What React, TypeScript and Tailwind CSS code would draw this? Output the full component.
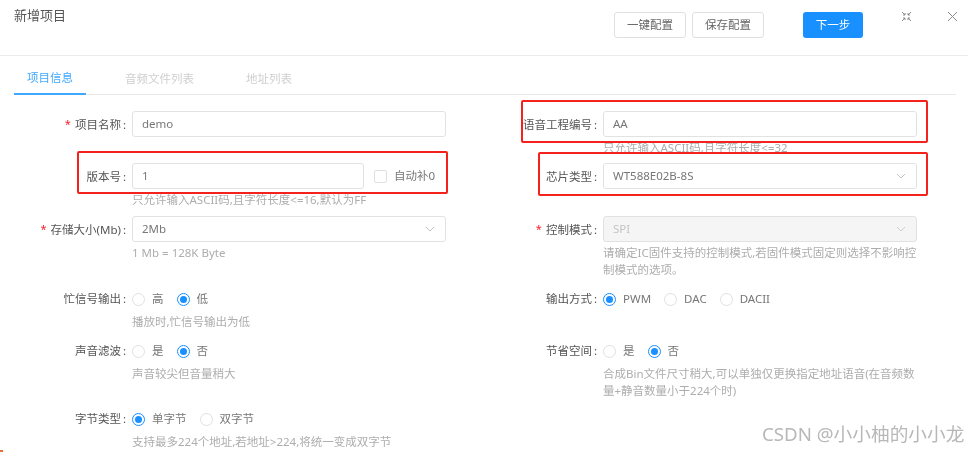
import React from "react";

const font = { fontFamily: '"Noto Sans", "Noto Sans CJK SC", sans-serif' };

function Label({ text, req, radio }: { text: string; req?: boolean; radio?: boolean }) {
  return (
    <div className={`w-[126px] shrink-0 flex justify-end items-center h-[26px] text-[11.5px] text-[#555] whitespace-nowrap ${radio ? "" : "pt-[1px]"}`}>
      {req && <span className="text-[#f5222d] mr-1 text-[11px]">*</span>}
      <span>{text}</span>
      <span className="ml-[2px]">:</span>
    </div>
  );
}

function Input({ value, w = "w-[314px]" }: { value: string; w?: string }) {
  return (
    <div className={`${w} h-[26px] border border-[#e2e2e2] rounded-[3px] bg-white flex items-center px-[9px] text-[11.5px] text-[#777]`}>
      {value}
    </div>
  );
}

function Select({ value, disabled }: { value: string; disabled?: boolean }) {
  return (
    <div className={`w-[314px] h-[26px] border border-[#e2e2e2] rounded-[3px] flex items-center justify-between pl-[9px] pr-[10px] text-[11.5px] ${disabled ? "bg-[#f5f5f5] text-[#c4c4c4]" : "bg-white text-[#777]"}`}>
      <span>{value}</span>
      <svg width="10" height="6" viewBox="0 0 10 6" fill="none" stroke={disabled ? "#c8c8c8" : "#bdbdbd"} strokeWidth="0.9">
        <path d="M1 1l4 4 4-4" />
      </svg>
    </div>
  );
}

function Help({ children, radio }: { children: React.ReactNode; radio?: boolean }) {
  return <div className={`w-[314px] text-[11.5px] leading-[17px] text-[#adadad] ${radio ? "mt-[1px]" : "mt-[2px]"}`}>{children}</div>;
}

function Radio({ label, on }: { label: string; on?: boolean }) {
  return (
    <div className="flex items-center text-[11.5px] text-[#777] whitespace-nowrap">
      <span className={`w-[13px] h-[13px] rounded-full border flex items-center justify-center mr-[7px] ${on ? "border-[#1890ff]" : "border-[#e0e0e0]"}`}>
        {on && <span className="w-[7px] h-[7px] rounded-full bg-[#1890ff]" />}
      </span>
      {label}
    </div>
  );
}

function Field({ label, req, radio, children, help }: { label: string; req?: boolean; radio?: boolean; children: React.ReactNode; help?: React.ReactNode }) {
  return (
    <div className="flex gap-[6px]">
      <Label text={label} req={req} radio={radio} />
      <div className="flex flex-col">
        <div className="min-h-[26px] flex items-center">{children}</div>
        {help}
      </div>
    </div>
  );
}

function Btn({ children }: { children: React.ReactNode }) {
  return (
    <div className="w-[72px] h-[26px] border border-[#e0e0e0] rounded-[3px] flex items-center justify-center text-[11.5px] text-[#666]">
      {children}
    </div>
  );
}

export default function App() {
  return (
    <div className="relative w-[968px] h-[452px] overflow-hidden bg-white blur-[0.35px]" style={font}>
      <header className="h-[56px] border-b border-[#ececec] flex items-start pl-[14px] pt-[6px]">
        <div className="text-[13px] leading-[18px] text-[#555]">新增项目</div>
        <div className="ml-[548px] mt-[6px] flex gap-[6px]">
          <Btn>一键配置</Btn>
          <Btn>保存配置</Btn>
        </div>
        <div className="ml-[39px] mt-[6px] w-[60px] h-[26px] rounded-[3px] bg-[#1890ff] text-white text-[11.5px] flex items-center justify-center">
          下一步
        </div>
        <svg className="ml-[38px] mt-[5px]" width="11" height="11" viewBox="0 0 11 11" fill="none" stroke="#8c8c8c" strokeWidth="1">
          <path d="M1 1l3 3M4 2v2H2M10 1L7 4M7 2v2h2M1 10l3-3M2 7h2v2M10 10L7 7M9 7H7v2" />
        </svg>
        <svg className="ml-[35px] mt-[5px]" width="11" height="11" viewBox="0 0 11 11" fill="none" stroke="#8c8c8c" strokeWidth="1">
          <path d="M1 1l9 9M10 1L1 10" />
        </svg>
      </header>

      <nav className="ml-[14px] mr-[12px] h-[39px] border-b border-[#e8e8e8] flex text-[11.5px] text-[#cfcfcf]">
        <div className="w-[72px] h-[39px] pt-[6px] border-b-2 border-[#40a9ff] text-[#40a9ff] flex items-center justify-center">项目信息</div>
        <div className="ml-[39px] h-[39px] pt-[6px] flex items-center">音频文件列表</div>
        <div className="ml-[52px] h-[39px] pt-[6px] flex items-center">地址列表</div>
      </nav>

      <main className="mt-[16px] grid grid-cols-[471px_1fr] grid-rows-[52px_53px_70px_52px_68px_46px]">
        <Field label="项目名称" req><Input value="demo" /></Field>
        <Field label="语音工程编号" help={<Help>只允许输入ASCII码,且字符长度&lt;=32</Help>}><Input value="AA" /></Field>

        <Field label="版本号" help={<Help>只允许输入ASCII码,且字符长度&lt;=16,默认为FF</Help>}>
          <Input value="1" w="w-[232px]" />
          <div className="ml-[10px] w-[13px] h-[13px] border border-[#e0e0e0] rounded-[2px]" />
          <span className="ml-[7px] text-[11.5px] text-[#777] whitespace-nowrap">自动补0</span>
        </Field>
        <Field label="芯片类型"><Select value="WT588E02B-8S" /></Field>

        <Field label="存储大小(Mb)" req help={<Help>1 Mb = 128K Byte</Help>}><Select value="2Mb" /></Field>
        <Field label="控制模式" req help={<Help>请确定IC固件支持的控制模式,若固件模式固定则选择不影响控制模式的选项。</Help>}><Select value="SPI" disabled /></Field>

        <Field label="忙信号输出" radio help={<Help radio>播放时,忙信号输出为低</Help>}>
          <div className="flex gap-[13px]"><Radio label="高" /><Radio label="低" on /></div>
        </Field>
        <Field label="输出方式" radio>
          <div className="flex gap-[13px]"><Radio label="PWM" on /><Radio label="DAC" /><Radio label="DACII" /></div>
        </Field>

        <Field label="声音滤波" radio help={<Help radio>声音较尖但音量稍大</Help>}>
          <div className="flex gap-[13px]"><Radio label="是" /><Radio label="否" on /></div>
        </Field>
        <Field label="节省空间" radio help={<Help radio>合成Bin文件尺寸稍大,可以单独仅更换指定地址语音(在音频数量+静音数量小于224个时)</Help>}>
          <div className="flex gap-[13px]"><Radio label="是" /><Radio label="否" on /></div>
        </Field>

        <Field label="字节类型" radio help={<Help radio>支持最多224个地址,若地址&gt;224,将统一变成双字节</Help>}>
          <div className="flex gap-[13px]"><Radio label="单字节" on /><Radio label="双字节" /></div>
        </Field>
      </main>

      <div className="absolute left-[77px] top-[151px] w-[371px] h-[43px] border-2 border-[#f5211d] rounded-[2px]" />
      <div className="absolute left-[521px] top-[100px] w-[407px] h-[43px] border-2 border-[#f5211d] rounded-[2px]" />
      <div className="absolute left-[538px] top-[152px] w-[390px] h-[44px] border-2 border-[#f5211d] rounded-[2px]" />
      <div className="absolute left-[762px] top-[422px] text-[18.700px] leading-[24px] text-[#b8b8b8] whitespace-nowrap">CSDN @小小柚的小小龙</div>
      <div className="absolute left-0 top-[450px] w-[3px] h-[2px] bg-[#e8703a]" />
    </div>
  );
}
